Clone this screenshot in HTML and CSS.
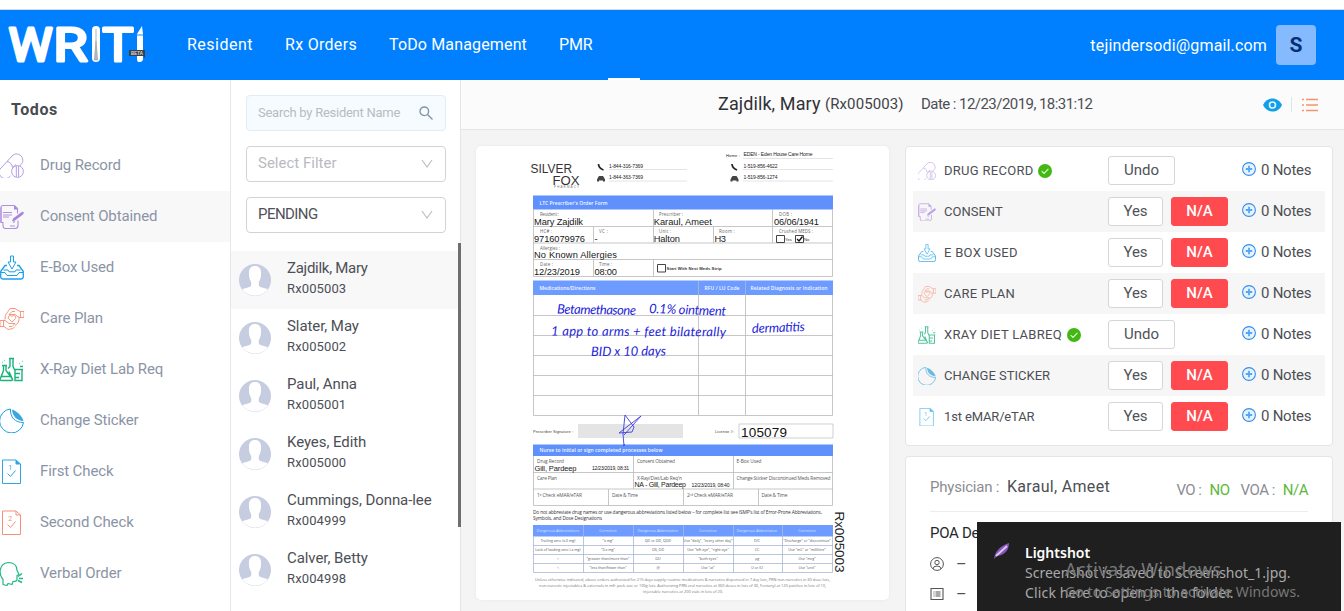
FILE: index.html
```html
<!DOCTYPE html>
<html lang="en">
<head>
<meta charset="utf-8">
<title>WRITI - Resident todos</title>
<link rel="stylesheet" href="styles.css">
</head>
<body>
<svg class="sprite" aria-hidden="true">
  <symbol id="pills" viewBox="0 0 24 24"><g fill="none" stroke="#b79be6" stroke-width="1"><path d="M2 13.500 12 2.500a6 6 0 0 1 10 1.500c2 4 0 6-2.500 8.500M7 8q4.500.500 5.500 6M10.500 22.500A6.300 6.300 0 1 1 2 13.500M12.500 14l3.500-3"/><circle cx="17.500" cy="18" r="5.900"/><path d="M16.300 12.500v11M18.600 12.500v11"/></g></symbol>
  <symbol id="consent" viewBox="0 0 24 24"><g fill="none" stroke="#b18ee0" stroke-width="1.100"><path d="M17.500 9V4l-3-3H3Q1 1 1 3v15h2v3.500Q3 24 5.500 24H15q3 0 3-3v-5"/><path d="M1 18V3M3 8h9M3 10.500h9M3 12.500h6M10 21.500h5M13 18l2-1"/></g><path fill="#a884df" d="M14 1l4 4h-4zM12 17l1-3 8-6 2 2-8 6zM22 7l2 1-1 2-2-1z"/></symbol>
  <symbol id="inbox" viewBox="0 0 24 24"><g fill="none" stroke="#1aa1ea" stroke-width="1.300" stroke-linejoin="round"><path d="M10.500.5h3v6h2.500l-4 7-4-7h2.500z" stroke-width="1"/><path d="M7 10H5l-4.300 6v5q0 2.500 2.500 2.500h17.600q2.500 0 2.500-2.500v-5L19 10h-2"/><path d="M3.500 14.500H8l1 1.800h6l1-1.800h4.500M1 17h4l2 3h10l2-3h4" stroke-width="1"/></g></symbol>
  <symbol id="care" viewBox="0 0 24 24"><g fill="none" stroke="#f58d70" stroke-width=".900"><path d="M8 5l2-3h5l5 3h4v6h-5l-4-3H9l3-3h3M20.500 5v6M15 20l-2 2-5 1-4-3H0v-6h5l4 3h6l-3 3H9M3.500 14v6"/><path d="M8 5a9 9 0 0 0-3 8M19 11a8 8 0 0 1-4 8M12 15.500l-3.500-3.500a2 2 0 0 1 3.500-2 2 2 0 0 1 3.500 2z"/></g></symbol>
  <symbol id="lab" viewBox="0 0 24 24"><g fill="none" stroke="#19b27b" stroke-width="1.400"><path d="M9 1h5M10 1v8l-2 2M13 1v8l2 4M2 8h5M3.500 8v5L0 22q0 1 2 1h9q2 0 1-2L6 13V8M1 19h9M14 12h9M15 12v11h7V12M15 16h5M15 20h4M9 14l4 9"/><path d="M2 5h.5M4 3h.5M19 6h.5M22 4h.5M20 9h3"/></g></symbol>
  <symbol id="sticker" viewBox="0 0 24 24"><path fill="none" stroke="#20a0e2" stroke-width="1" d="M10.500.5A12 12 0 1 0 23.500 14C15 14 10 9 10.500.5z"/><path fill="#3da7dc" d="M12 1c4 1 10 6 11.500 11.500C17 12 12.500 8 12 1z"/></symbol>
  <symbol id="first" viewBox="0 0 24 24"><path fill="none" stroke="#2da7e4" stroke-width="1" d="M2.500.5H16l4.500 4v19.500h-18zM16 .5v4h4.500M7.500 14l3 3 5-6"/><path fill="#2da7e4" d="M16 .5l4.500 4H16z"/><text x="8.300" y="10.500" font-family="Roboto" font-size="7" fill="#2da7e4">1</text></symbol>
  <symbol id="second" viewBox="0 0 24 24"><path fill="none" stroke="#f58f79" stroke-width="1" d="M2.500.5H16l4.500 4v19.500h-18zM16 .5v4h4.500M7.500 14l3 3 5-6"/><text x="8.300" y="10.500" font-family="Roboto" font-size="7" fill="#f58f79">2</text></symbol>
  <symbol id="verbal" viewBox="0 0 24 24"><g fill="none" stroke="#22b984" stroke-width="1.200" stroke-linejoin="round"><path d="M3 23v-5C-2 12-.5 2 8 1c6 0 9 3 9 8l2 4-2 1v4q0 2-4 2l-1 3-4-1-1 2z"/><path d="M18 15l4-3M19 17h4M18 19l4 2" stroke-width="1.500"/></g></symbol>
  <symbol id="avatar" viewBox="0 0 32 32"><circle cx="16" cy="16" r="16" fill="#c7cde1"/><path fill="#fff" d="M3.300 25.500C6 23.500 11 24 12.200 21.500V18C10 15 9.800 11 10 7.500 10.500 3.500 13 2 16 2s5.500 1.500 6 5.500c.2 3.500 0 7.500-2.200 10.500v3.500C21 24 26 23.500 28.700 25.500A16 16 0 0 1 3.300 25.500z"/></symbol>
  <symbol id="chevron" viewBox="0 0 12 10"><path fill="none" stroke="#bfbfbf" stroke-width="1.200" d="M1 1l5 7 5-7"/></symbol>
  <symbol id="done" viewBox="0 0 14 14"><circle cx="7" cy="7" r="7" fill="#43b714"/><path fill="none" stroke="#e4f9dc" stroke-width="1.100" d="M3.700 7.200l2.300 2.300 4.400-4.600"/></symbol>
  <symbol id="plus" viewBox="0 0 14 14"><circle cx="7" cy="7" r="6.400" fill="#e7f4ff" stroke="#348eed" stroke-width="1.100"/><path stroke="#57a6f3" stroke-width="1.800" d="M7 3.800v6.400M3.800 7h6.400"/></symbol>
</svg>

<div class="browser-edge"></div>
<header class="topbar">
  <svg class="logo" viewBox="0 0 150 50" width="150" height="50">
    <g class="logo-type">
      <text x="8.500" y="41.500" textLength="44" lengthAdjust="spacingAndGlyphs">W</text>
      <text x="53.500" y="41.500" textLength="34" lengthAdjust="spacingAndGlyphs">R</text>
      <text x="102.500" y="41.500" textLength="31" lengthAdjust="spacingAndGlyphs">T</text>
    </g>
    <rect x="92" y="7" width="8" height="36" rx="4" fill="#fff"/>
    <path d="M96 10v10M95 21h2M96 22l-1.500 19h3z" stroke="#9aa1a8" stroke-width=".8" fill="#bbb"/>
    <path fill="#fff" d="M137 15l5-8 1 8v26l-2 2h-3l-1-2z"/><path d="M136 16h7" stroke="#2787e9"/>
    <rect x="129" y="31" width="16" height="6" fill="#3b3f47"/><path d="M142 36h3v3z" fill="#3b3f47"/>
    <text class="beta" x="131" y="36" textLength="12">BETA</text>
  </svg>
  <nav class="mainnav"><a class="n1">Resident</a><a class="n2">Rx Orders</a><a class="n3">ToDo Management</a><a class="n4">PMR</a><i class="nav-marker"></i></nav>
  <span class="email">tejindersodi@gmail.com</span>
  <span class="badge">S</span>
</header>

<main class="layout">
  <aside class="sidebar">
    <h2>Todos</h2>
    <ul>
      <li><svg><use href="#pills"/></svg><span>Drug Record</span></li>
      <li class="active"><svg><use href="#consent"/></svg><span>Consent Obtained</span></li>
      <li><svg><use href="#inbox"/></svg><span>E-Box Used</span></li>
      <li><svg><use href="#care"/></svg><span>Care Plan</span></li>
      <li><svg><use href="#lab"/></svg><span>X-Ray Diet Lab Req</span></li>
      <li><svg><use href="#sticker"/></svg><span>Change Sticker</span></li>
      <li><svg><use href="#first"/></svg><span>First Check</span></li>
      <li><svg><use href="#second"/></svg><span>Second Check</span></li>
      <li><svg><use href="#verbal"/></svg><span>Verbal Order</span></li>
    </ul>
  </aside>

  <section class="residents">
    <div class="field search"><span>Search by Resident Name</span><svg viewBox="0 0 14 14" width="14" height="14"><g fill="none" stroke="#8793aa" stroke-width="1.400"><circle cx="5.300" cy="5.300" r="4.300"/><path d="M8.500 8.500l5 5"/></g></svg></div>
    <div class="field filter"><span>Select Filter</span><svg width="12" height="10"><use href="#chevron"/></svg></div>
    <div class="field status"><span>PENDING</span><svg width="12" height="10"><use href="#chevron"/></svg></div>
    <ul>
      <li class="active"><svg><use href="#avatar"/></svg><div><b class="tight">Zajdilk, Mary</b><small>Rx005003</small></div></li>
      <li><svg><use href="#avatar"/></svg><div><b>Slater, May</b><small>Rx005002</small></div></li>
      <li><svg><use href="#avatar"/></svg><div><b>Paul, Anna</b><small>Rx005001</small></div></li>
      <li><svg><use href="#avatar"/></svg><div><b>Keyes, Edith</b><small>Rx005000</small></div></li>
      <li><svg><use href="#avatar"/></svg><div><b>Cummings, Donna-lee</b><small>Rx004999</small></div></li>
      <li><svg><use href="#avatar"/></svg><div><b>Calver, Betty</b><small>Rx004998</small></div></li>
    </ul>
    <i class="scrollbar"></i>
  </section>

  <section class="detail">
    <div class="detail-head">
      <span class="who">Zajdilk, Mary</span><span class="rx">(Rx005003)</span><span class="date">Date : 12/23/2019, 18:31:12</span>
      <svg class="head-icons" viewBox="0 0 56 16" width="56" height="16"><path fill="#109fea" d="M0 8C4-.8 15-.8 19 8 15 16.800 4 16.800 0 8z"/><circle cx="9.500" cy="8" r="3" fill="none" stroke="#e3f6ff" stroke-width="1.600"/><path stroke="#d9e8e9" d="M28.500 0v15"/><path stroke="#f7936f" stroke-width="1.300" d="M39 2.500h2m2 0h12M39 8h2m2 0h12M39 13.500h2m2 0h12"/></svg>
    </div>
    <div class="panes">
      <article class="document">
        <svg viewBox="476 146 413 454" width="413" height="454">
          <g font-family="Liberation Sans">
          <g class="brand"><text x="530.500" y="172.500" font-size="12.500" textLength="41.500" lengthAdjust="spacingAndGlyphs">SILVER</text><text x="552.500" y="184.500" font-size="12.500" textLength="27" lengthAdjust="spacingAndGlyphs">FOX</text><text x="554" y="188" font-size="3" textLength="25" fill="#777">PHARMACY</text></g>
          <path class="line light" d="M609 169.500h78M609 181h78M743 158.500h90M743 169.500h90M743 181h90"/>
          <g fill="none" stroke="#222" stroke-width="1.700"><path d="M598.500 164q0 4 5 6M732 164q0 4 5 6"/></g>
          <path fill="#444" d="M597 179.500l1-2 1-1.500h4l1 1.500 1 2v2h-2v-1h-4v1h-2zM730.500 179.500l1-2 1-1.500h4l1 1.500 1 2v2h-2v-1h-4v1h-2z"/>
          <g font-size="5" fill="#222"><text x="609" y="167.500" textLength="34">1-844-316-7369</text><text x="609" y="179" textLength="34">1-844-363-7369</text><text x="726" y="157" font-size="4" textLength="14">Home :</text><text x="743.500" y="156" textLength="69">EDEN - Eden House Care Home</text><text x="743.500" y="167.500" textLength="34">1-519-856-4622</text><text x="743.500" y="179" textLength="34">1-519-856-1274</text></g>
          <path fill="#5f90fc" d="M533 195.500h300v14H533zM533 444.500h300V456H533z"/><path fill="#6d9bff" d="M533 280.500h300V295H533zM533 525h300v11.500H533z"/>
          <g fill="#f4f8ff" font-size="5" font-weight="600" font-family="Open Sans"><text x="539.500" y="204.500" textLength="68">LTC Prescriber's Order Form</text><text x="539.500" y="290" textLength="56">Medications/Directions</text><text x="704.500" y="290" textLength="35">RFU / LU Code</text><text x="750.500" y="290" textLength="77">Related Diagnosis or Indication</text><text x="539.500" y="452" textLength="123">Nurse to initial or sign completed processes below</text></g>
          <path class="line" d="M533.500 209.500v67h299v-67M533 226.500h300M533 243h300M533 259.500h300M653.500 209.500V243M653.500 259.500v17M593.500 226.500V243M593.500 259.500v17M713.500 226.500V243M772.500 209.500V243"/>
          <g font-size="4.400" fill="#666" font-family="Open Sans"><text x="540" y="216" textLength="19">Resident :</text><text x="659" y="216" textLength="24">Prescriber :</text><text x="779" y="216" textLength="13">DOB :</text><text x="540" y="232.500" textLength="12">HC# :</text><text x="599" y="232.500" textLength="9">VC :</text><text x="659" y="232.500" textLength="12">Unit :</text><text x="719" y="232.500" textLength="16">Room :</text><text x="779" y="232.500" textLength="34">Crushed MEDS :</text><text x="540" y="249.500" textLength="20">Allergies :</text><text x="540" y="265.500" textLength="13">Date :</text><text x="599" y="265.500" textLength="13">Time :</text></g>
          <g font-size="9.300" fill="#171717"><text x="534" y="225" textLength="49">Mary Zajdilk</text><text x="653.800" y="225" textLength="58">Karaul, Ameet</text><text x="774" y="225" textLength="45">06/06/1941</text><text x="534" y="241.800" textLength="51">9716079976</text><text x="594.500" y="241.800">-</text><text x="653.800" y="241.800" textLength="26">Halton</text><text x="714.500" y="241.800" textLength="11.500">H3</text><text x="534" y="258.300" textLength="83">No Known Allergies</text><text x="534" y="274.800" textLength="46">12/23/2019</text><text x="594.500" y="274.800" textLength="22.500">08:00</text></g>
          <path fill="#fff" stroke="#444" stroke-width="1" d="M776.500 235.500h8v7h-8zM795.500 235.500h8v7h-8zM657.500 264.500h8v7.500h-8z"/><path fill="none" stroke="#111" stroke-width="1.300" d="M797 239l2 2 3.500-4.500"/>
          <g font-size="4.200" fill="#333"><text x="785" y="240.800">Yes</text><text x="804" y="240.800">No</text><text x="666.500" y="269.800" font-weight="bold" textLength="55">Start With Next Meds Strip</text></g>
          <path class="line" d="M533.500 295v120.500h299V295M533 315.500h300M533 335.500h300M533 355.500h300M533 375.500h300M533 395.500h300M698.500 281v134M745.500 281v134"/>
          <g class="ink"><text transform="translate(557 313.500) rotate(1)" textLength="79">Betamethasone</text><text transform="translate(649 313) rotate(2)" textLength="77">0.1% ointment</text><text transform="translate(551 335.500) rotate(.3)" textLength="175">1 app to arms + feet bilaterally</text><text transform="translate(591 356) rotate(-.5)" textLength="75">BID x 10 days</text><text transform="translate(752 333) rotate(-2)" textLength="53">dermatitis</text></g>
          <path fill="#e4e4e4" d="M578 424h105v14H578z"/><path fill="#fff" stroke="#bbb" stroke-width=".7" d="M739 424h94v14h-94z"/>
          <path fill="none" stroke="#3c3ce0" stroke-width=".9" d="M624 446l-1-12 2-19 9 12-2 5-13 1 22-17-17 19M623 446l2-2"/>
          <g font-size="4" fill="#444"><text x="533" y="432.500" textLength="40">Prescriber Signature :</text><text x="715" y="432.500" textLength="19">License #:</text></g><text x="741" y="436.500" font-size="13.500" textLength="46" fill="#111">105079</text>
          <path class="line" d="M533.500 456v49.500h299V456M533 472.500h300M533 489h300M633.500 456v33M733.500 456v33M608.500 489v16.500M683.500 489v16.500M758.500 489v16.500"/>
          <g font-size="4.800" fill="#555" font-family="Open Sans"><text x="537" y="463" textLength="27">Drug Record</text><text x="637" y="463" textLength="38">Consent Obtained</text><text x="736.500" y="463" textLength="25">E-Box Used</text><text x="537" y="479.800" textLength="20">Care Plan</text><text x="637" y="479.800" textLength="45">X-Ray/Diet/Lab Req'n</text><text x="736.500" y="479.800" textLength="94">Change Sticker Discontinued Meds Removed</text><text x="537" y="496.500" textLength="45">1ˢᵗ Check eMAR/eTAR</text><text x="612" y="496.500" textLength="26">Date &amp; Time</text><text x="687" y="496.500" textLength="46">2ⁿᵈ Check eMAR/eTAR</text><text x="761.500" y="496.500" textLength="26">Date &amp; Time</text></g>
          <g fill="#181818"><text x="534.500" y="471" font-size="7.500" textLength="42">Gill, Pardeep</text><text x="592" y="470" font-size="5" textLength="37">12/23/2019, 08:31</text><text x="634.500" y="487" font-size="7" textLength="51.500">NA - Gill, Pardeep</text><text x="691.500" y="486.500" font-size="5" textLength="38">12/23/2019, 08:40</text></g>
          <g font-size="4.800" fill="#333" font-family="Open Sans"><text x="533" y="514" textLength="289">Do not abbreviate drug names or use dangerous abbreviations listed below – for complete list see ISMP's list of Error-Prone Abbreviations,</text><text x="533" y="520.300" textLength="69">Symbols, and Dose Designations</text></g>
          <path class="line blue" d="M533.500 536v36.500h299V536M533 545.500h300M533 554.500h300M533 563.500h300M583.500 525v47M633.500 525v47M683.500 525v47M733.500 525v47M782.500 525v47"/>
          <g font-size="3.600" text-anchor="middle" fill="#dce7ff" font-family="Open Sans"><text x="558" y="532">Dangerous Abbreviations</text><text x="608" y="532">Correction</text><text x="658" y="532">Dangerous Abbreviation</text><text x="708" y="532">Correction</text><text x="757" y="532">Dangerous Abbreviation</text><text x="807" y="532">Correction</text></g>
          <g font-size="3.600" text-anchor="middle" fill="#555" font-family="Open Sans"><text x="558" y="542.300">Trailing zero (x.0 mg)</text><text x="608" y="542.300">"x mg"</text><text x="658" y="542.300">QD or OD, QOD</text><text x="708" y="542.300">Use "daily", "every other day"</text><text x="757" y="542.300">D/C</text><text x="807" y="542.300">"Discharge" or "discontinue"</text><text x="558" y="551.300">Lack of leading zero (.x mg)</text><text x="608" y="551.300">"0.x mg"</text><text x="658" y="551.300">OS, OD</text><text x="708" y="551.300">Use "left eye", "right eye"</text><text x="757" y="551.300">CC</text><text x="807" y="551.300">Use "mL" or "millilitre"</text><text x="558" y="560.300">&gt;</text><text x="608" y="560.300">"greater than/more than"</text><text x="658" y="560.300">OU</text><text x="708" y="560.300">"both eyes"</text><text x="757" y="560.300">µg</text><text x="807" y="560.300">Use "mcg"</text><text x="558" y="569.300">&lt;</text><text x="608" y="569.300">"less than/fewer than"</text><text x="658" y="569.300">@</text><text x="708" y="569.300">Use "at"</text><text x="757" y="569.300">U or IU</text><text x="807" y="569.300">Use "unit"</text></g>
          <g font-size="3.900" fill="#777" font-family="Open Sans"><text x="535" y="581" textLength="295">Unless otherwise indicated, above orders authorized for 210 days supply: routine medications &amp; narcotics dispensed in 7 day lots, PRN non-narcotics in 30 dose lots,</text><text x="539" y="587" textLength="287">non-narcotic injectables &amp; externals in mfr pack size or 100g lots. Authorizing PRN oral narcotics at 360 doses in lots of 30, Fentanyl at 120 patches in lots of 10,</text><text x="643" y="593" textLength="80">injectable narcotics at 200 vials in lots of 20.</text></g>
          <text transform="translate(835 511.500) rotate(90)" font-size="13.500" textLength="61" fill="#222">Rx005003</text>
          </g>
        </svg>
      </article>

      <div class="cards">
        <div class="card checks">
          <div class="row"><svg class="ic"><use href="#pills"/></svg><span class="wide">DRUG RECORD</span><svg class="ok"><use href="#done"/></svg><div class="acts"><button class="undo">Undo</button></div><svg class="pl"><use href="#plus"/></svg><em>0 Notes</em></div>
          <div class="row alt"><svg class="ic"><use href="#consent"/></svg><span>CONSENT</span><div class="acts"><button>Yes</button><button class="na">N/A</button></div><svg class="pl"><use href="#plus"/></svg><em>0 Notes</em></div>
          <div class="row"><svg class="ic"><use href="#inbox"/></svg><span class="wide">E BOX USED</span><div class="acts"><button>Yes</button><button class="na">N/A</button></div><svg class="pl"><use href="#plus"/></svg><em>0 Notes</em></div>
          <div class="row alt"><svg class="ic"><use href="#care"/></svg><span class="wide">CARE PLAN</span><div class="acts"><button>Yes</button><button class="na">N/A</button></div><svg class="pl"><use href="#plus"/></svg><em>0 Notes</em></div>
          <div class="row"><svg class="ic"><use href="#lab"/></svg><span class="wide">XRAY DIET LABREQ</span><svg class="ok"><use href="#done"/></svg><div class="acts"><button class="undo">Undo</button></div><svg class="pl"><use href="#plus"/></svg><em>0 Notes</em></div>
          <div class="row alt"><svg class="ic"><use href="#sticker"/></svg><span>CHANGE STICKER</span><div class="acts"><button>Yes</button><button class="na">N/A</button></div><svg class="pl"><use href="#plus"/></svg><em>0 Notes</em></div>
          <div class="row"><svg class="ic"><use href="#first"/></svg><span class="mixed">1st eMAR/eTAR</span><div class="acts"><button>Yes</button><button class="na">N/A</button></div><svg class="pl"><use href="#plus"/></svg><em>0 Notes</em></div>
        </div>
        <div class="card info">
          <div class="physician"><span class="muted">Physician :</span><span class="name">Karaul, Ameet</span><div class="vo"><span>VO :</span><b>NO</b><span class="voa">VOA :</span><b>N/A</b></div></div>
          <div class="poa">POA De</div>
          <div class="line-item"><svg viewBox="0 0 14 14"><g fill="none" stroke="#555" stroke-width="1"><circle cx="7" cy="7" r="6.400"/><circle cx="7" cy="5.500" r="2.200"/><path d="M3 12q0-3 4-3t4 3"/></g></svg><span>–</span></div>
          <div class="line-item"><svg viewBox="0 0 14 14"><path fill="none" stroke="#555" stroke-width="1.100" d="M1 1.500h12v11H1zM3.500 5h1m1 0h5M3.500 7h1m1 0h5M3.500 9h1m1 0h5"/></svg><span>–</span></div>
        </div>
      </div>
    </div>
  </section>
</main>

<aside class="toast">
  <svg viewBox="0 0 16 17" width="16" height="17"><path fill="#8657b9" d="M0 16C1 8 6 3 15 0 15 7 11 12 3 13z"/><path fill="none" stroke="#dfc7f4" stroke-width="1.800" d="M2 13L13 3"/></svg>
  <div class="toast-copy"><strong>Lightshot</strong><p class="p1">Screenshot is saved to Screenshot_1.jpg.</p><p class="p2">Click here to open in the folder.</p></div>
  <div class="watermark"><p class="w1">Activate Windows</p><p class="w2">Go to Settings to activate Windows.</p></div>
</aside>
</body>
</html>
```

FILE: styles.css
```css
* { box-sizing: border-box; }
body { margin: 0; width: 1344px; height: 611px; overflow: hidden; background: #fff; font-family: Roboto, "Noto Sans", sans-serif; color: #4d4f55; font-weight: 400; position: relative; }
ul { list-style: none; margin: 0; padding: 0; }
p { margin: 0; }
span, a, b, em, small, strong, button { white-space: nowrap; }
.sprite { display: none; }

.browser-edge { height: 10px; border-bottom: 1px solid #cfdce8; }
.topbar { height: 70px; background: #0080ff; display: flex; align-items: center; padding-right: 28px; color: #fff; }
.logo { flex: none; margin: -2px 37px 0 0; overflow: visible; }
.logo-type { font: 46px Roboto, sans-serif; fill: #fff; stroke: #fff; stroke-width: 3; stroke-linejoin: round; }
.beta { font: bold 4.5px "Liberation Sans", sans-serif; fill: #ddd; }
.mainnav { position: relative; display: flex; gap: 32px; align-self: stretch; align-items: center; font-size: 16px; padding-bottom: 2px; }
.mainnav a { flex: none; }
.n1 { width: 66px; letter-spacing: .5px; }
.n2 { width: 72px; letter-spacing: .3px; }
.n3 { width: 138px; letter-spacing: .15px; }
.n4 { letter-spacing: -.2px; }
.nav-marker { position: absolute; left: 421px; bottom: 0; width: 32px; height: 2px; background: #fff; }
.email { margin-left: auto; font-size: 16px; letter-spacing: .16px; }
.badge { width: 40px; height: 40px; margin-left: 9px; border-radius: 4px; background: #85baff; color: #052f75; font-weight: 700; font-size: 21px; display: grid; place-items: center; }

.layout { display: flex; height: 531px; }
.sidebar { width: 231px; border-right: 1px solid #e7e7e9; padding-top: 20px; }
.sidebar h2 { margin: 0 0 20px 11px; font-size: 16px; line-height: 20px; letter-spacing: .6px; color: #484b50; }
.sidebar li { height: 51px; display: flex; align-items: center; color: #8b94a6; font-size: 15px; letter-spacing: -.13px; }
.sidebar li svg { width: 24px; height: 25px; margin-right: 16px; }
.sidebar li span { padding-bottom: 2px; }
.sidebar .active, .residents .active { background: #f8f8f9; }

.residents { position: relative; width: 230px; border-right: 1px solid #e5e5e5; padding-top: 15px; }
.field { margin: 0 14px 15px 15px; height: 36px; border: 1px solid #d3d3d5; border-radius: 4px; padding: 0 12px 0 11px; display: flex; align-items: center; justify-content: space-between; font-size: 15px; color: #b9bbc0; }
.field span { padding-bottom: 2px; }
.field.search { background: #f6fbff; border-color: #e1edf6; font-size: 13px; letter-spacing: -.26px; }
.field.status { color: #505258; margin-bottom: 18px; letter-spacing: -.55px; }
.residents li { height: 58px; display: flex; align-items: center; padding-left: 8px; }
.residents li svg { width: 32px; height: 32px; margin-right: 16px; }
.residents li div { padding-bottom: 3px; }
.residents li b, .residents li small { display: block; font-weight: 400; }
.residents li b { font-size: 15px; line-height: 20px; letter-spacing: -.07px; }
.residents li b.tight { letter-spacing: -.28px; }
.residents li small { font-size: 13px; line-height: 20px; margin-top: 1px; letter-spacing: .12px; }
.scrollbar { position: absolute; right: -1px; top: 163px; width: 3px; height: 284px; background: #6e6e6e; }

.detail { flex: 1; background: #f4f4f4; overflow: hidden; }
.detail-head { height: 50px; border-bottom: 1px solid #e4e4e4; background: #fbfbfb; display: flex; align-items: center; padding: 0 25px 2px 257px; }
.who { font-size: 18px; color: #303136; width: 107px; letter-spacing: .1px; }
.rx { font-size: 15px; color: #414247; width: 96px; letter-spacing: .1px; }
.date { font-size: 15px; letter-spacing: -.55px; }
.head-icons { margin: 2px 0 0 auto; }
.panes { display: flex; height: 481px; padding: 16px 11px 0 15px; gap: 16px; }
.document { width: 413px; height: 454px; border-radius: 5px; background: #fff; box-shadow: 0 0 3px #e6e6e6; }
.document svg { display: block; }
.brand { fill: #333; }
.line { fill: none; stroke: #b9b9b9; stroke-width: .8; }
.line.light { stroke: #ddd; }
.line.blue { stroke: #a9b7d5; }
.ink { font: italic 400 13px Lato, sans-serif; fill: #2424dc; }

.cards { width: 428px; display: flex; flex-direction: column; }
.card { background: #fff; border: 1px solid #e5e5e5; border-radius: 4px; }
.checks { flex: none; height: 300px; padding: 3px 7px; }
.row { height: 41px; display: flex; align-items: center; padding-left: 5px; font-size: 13px; }
.row.alt { background: #f6f6f6; }
.row .wide { letter-spacing: .28px; }
.row .mixed { letter-spacing: -.15px; }
.ic { width: 18px; height: 18px; margin-right: 8px; opacity: .75; }
.ok { width: 14px; height: 14px; margin-left: 5px; }
.acts { display: flex; gap: 8px; width: 134px; margin-left: auto; }
button { width: 55px; height: 29px; padding: 0 0 2px; border: 1px solid #d6d6d8; border-radius: 3px; background: #fff; color: #505258; font: 15px Roboto, sans-serif; }
.undo { width: 67px; }
.na { width: 57px; background: #ff4b50; border-color: #ff4b50; color: #fff; font-weight: 500; }
.pl { width: 14px; height: 14px; margin-bottom: 3px; }
.row em { font-style: normal; font-size: 15px; width: 64px; margin-left: 5px; letter-spacing: -.25px; padding-bottom: 2px; }
.info { flex: 1; margin-top: 10px; padding: 0 24px; border-bottom: 0; border-radius: 4px 4px 0 0; overflow: hidden; }
.physician { height: 55px; border-bottom: 1px solid #ededed; display: flex; align-items: center; padding-top: 5px; }
.muted { font-size: 15px; color: #8b8d92; width: 77px; letter-spacing: -.2px; }
.name { font-size: 16px; letter-spacing: .3px; }
.vo { margin-left: auto; display: flex; font-size: 15px; color: #8b8d92; padding-top: 6px; letter-spacing: -.5px; }
.vo b { font-weight: 400; color: #5db83c; margin-left: 8px; }
.voa { margin-left: 11px; }
.poa { font-size: 15px; line-height: 20px; margin: 11px 0 6px; color: #25272c; letter-spacing: -.3px; white-space: nowrap; }
.line-item { height: 30px; display: flex; align-items: center; gap: 12px; }
.line-item svg { width: 14px; height: 14px; }

.toast { position: absolute; left: 977px; top: 522px; width: 364px; height: 89px; background: #1f1f1f; display: flex; padding: 21px 0 0 17px; font-family: "Noto Sans", sans-serif; color: #a9a9a9; overflow: hidden; }
.toast-copy { margin-left: 15px; font-size: 14px; line-height: 20px; }
.toast strong { display: block; color: #fff; font-weight: 600; }
.p2 { letter-spacing: .15px; }
.watermark { position: absolute; left: 88px; top: 35px; color: #777; font-size: 14px; line-height: 22px; white-space: nowrap; letter-spacing: .09px; }
.w1 { font-size: 18px; line-height: 24px; letter-spacing: .5px; }
```
